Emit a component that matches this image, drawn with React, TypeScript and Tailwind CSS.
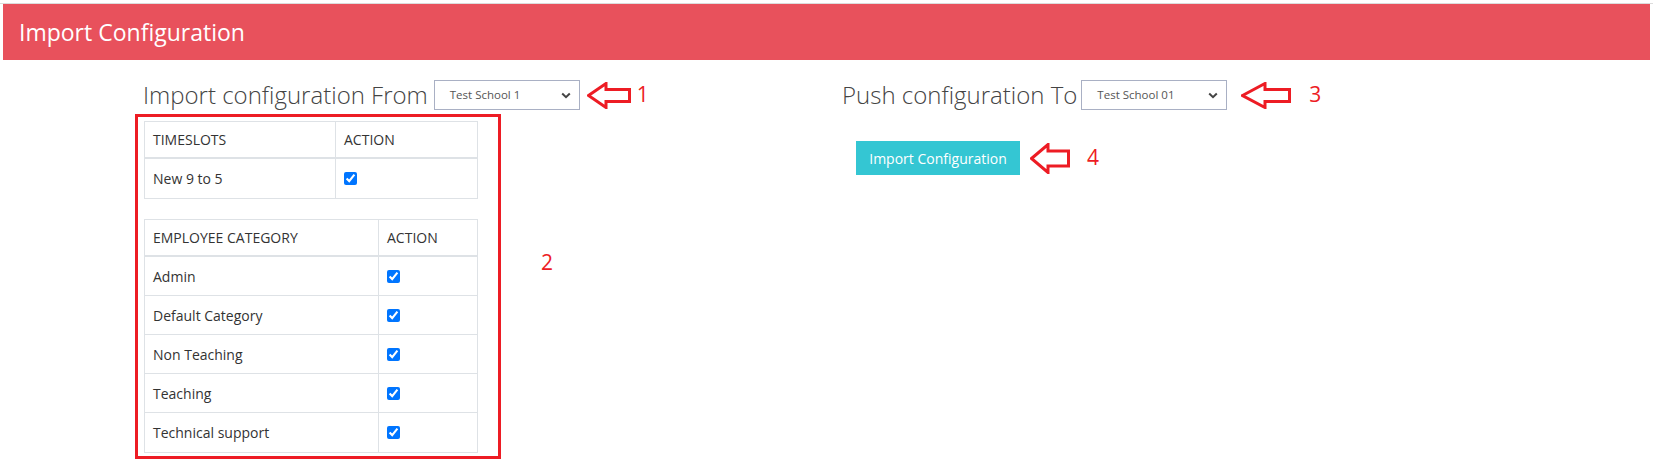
import React from "react";

const RED = "#ed1c24";

function Arrow({ w, h, hx, sh }: { w: number; h: number; hx: number; sh: number }) {
  const m = h / 2;
  const pts = [
    [1.5, m],
    [hx, 1.5],
    [hx, m - sh / 2],
    [w - 1.5, m - sh / 2],
    [w - 1.5, m + sh / 2],
    [hx, m + sh / 2],
    [hx, h - 1.5],
  ]
    .map((p) => p.join(","))
    .join(" ");
  return (
    <svg width={w} height={h} viewBox={`0 0 ${w} ${h}`} className="shrink-0">
      <polygon points={pts} fill="none" stroke={RED} strokeWidth={3} strokeLinejoin="miter" />
    </svg>
  );
}

function FakeSelect({ value }: { value: string }) {
  return (
    <div className="flex h-[30px] w-[146px] items-center justify-between border border-[#a9b0c4] bg-white pl-[15px] pr-[8px] text-[11.5px] text-[#555]">
      <span>{value}</span>
      <svg width="10" height="7" viewBox="0 0 10 7">
        <path d="M1.2 1.5 L5 5.2 L8.8 1.5" fill="none" stroke="#444" strokeWidth="2" />
      </svg>
    </div>
  );
}

function ConfigTable({ head, items, colW }: { head: string; items: string[]; colW: string }) {
  return (
    <div className="w-[334px] border border-[#dee2e6] text-[14px] text-[#333]">
      <div className="flex h-[37px] border-b-2 border-[#dee2e6]">
        <div className={`${colW} flex items-center border-r border-[#dee2e6] px-2`}>{head}</div>
        <div className="flex flex-1 items-center px-2">ACTION</div>
      </div>
      {items.map((it, i) => (
        <div
          key={it}
          className={`flex h-[39px] ${i < items.length - 1 ? "border-b border-[#dee2e6]" : ""}`}
        >
          <div className={`${colW} flex items-center border-r border-[#dee2e6] px-2`}>{it}</div>
          <div className="flex flex-1 items-center px-2">
            <input type="checkbox" defaultChecked className="m-0 h-[13px] w-[13px]" />
          </div>
        </div>
      ))}
    </div>
  );
}

export default function App() {
  return (
    <div className="min-h-[462px] bg-white font-['Open_Sans',sans-serif]">
      <div className="mt-[3px] border-t border-[#dcdcdc]">
        <div className="mx-[3px] flex h-[56px] items-center bg-[#e8515c] pl-[16px] text-[23px] text-white">
          Import Configuration
        </div>
      </div>

      <div className="flex pt-[20px]">
        {/* left: source school */}
        <div className="ml-[135px] w-[707px] shrink-0">
          <div className="ml-[8px] flex h-[30px] items-center">
            <span className="text-[24px] font-light text-[#444]">Import configuration From</span>
            <div className="ml-[6px]">
              <FakeSelect value="Test School 1" />
            </div>
            <div className="ml-[7px]">
              <Arrow w={44} h={27} hx={19} sh={12} />
            </div>
            <span className="ml-[6px] text-[21px] text-[#ed1c24]">1</span>
          </div>

          <div className="mt-[4px] flex items-start">
            <div className="flex w-[366px] flex-col gap-[20px] border-[3px] border-[#ed1c24] pb-[3px] pl-[6px] pt-[4px]">
              <ConfigTable head="TIMESLOTS" items={["New 9 to 5"]} colW="w-[191px]" />
              <ConfigTable
                head="EMPLOYEE CATEGORY"
                items={["Admin", "Default Category", "Non Teaching", "Teaching", "Technical support"]}
                colW="w-[234px]"
              />
            </div>
            <span className="ml-[40px] mt-[133px] text-[21px] text-[#ed1c24]">2</span>
          </div>
        </div>

        {/* right: target school */}
        <div className="flex-1">
          <div className="flex h-[30px] items-center">
            <span className="text-[24px] font-light text-[#444]">Push configuration To</span>
            <div className="ml-[4px]">
              <FakeSelect value="Test School 01" />
            </div>
            <div className="ml-[14px]">
              <Arrow w={50} h={27} hx={24} sh={12} />
            </div>
            <span className="ml-[18px] text-[21px] text-[#ed1c24]">3</span>
          </div>

          <div className="ml-[14px] mt-[31px] flex items-center">
            <button className="h-[34px] w-[164px] bg-[#34c6d3] text-[14px] text-white">
              Import Configuration
            </button>
            <div className="ml-[10px]">
              <Arrow w={40} h={31} hx={18} sh={15} />
            </div>
            <span className="ml-[17px] text-[21px] text-[#ed1c24]">4</span>
          </div>
        </div>
      </div>
    </div>
  );
}
